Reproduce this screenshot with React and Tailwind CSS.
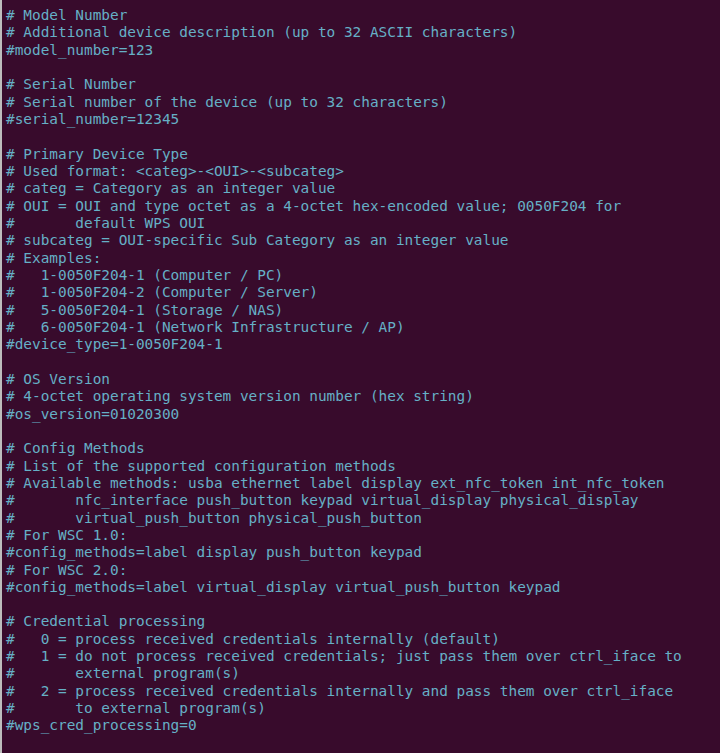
import React from "react";

const lines = [
  "# Model Number",
  "# Additional device description (up to 32 ASCII characters)",
  "#model_number=123",
  "",
  "# Serial Number",
  "# Serial number of the device (up to 32 characters)",
  "#serial_number=12345",
  "",
  "# Primary Device Type",
  "# Used format: <categ>-<OUI>-<subcateg>",
  "# categ = Category as an integer value",
  "# OUI = OUI and type octet as a 4-octet hex-encoded value; 0050F204 for",
  "#       default WPS OUI",
  "# subcateg = OUI-specific Sub Category as an integer value",
  "# Examples:",
  "#   1-0050F204-1 (Computer / PC)",
  "#   1-0050F204-2 (Computer / Server)",
  "#   5-0050F204-1 (Storage / NAS)",
  "#   6-0050F204-1 (Network Infrastructure / AP)",
  "#device_type=1-0050F204-1",
  "",
  "# OS Version",
  "# 4-octet operating system version number (hex string)",
  "#os_version=01020300",
  "",
  "# Config Methods",
  "# List of the supported configuration methods",
  "# Available methods: usba ethernet label display ext_nfc_token int_nfc_token",
  "#       nfc_interface push_button keypad virtual_display physical_display",
  "#       virtual_push_button physical_push_button",
  "# For WSC 1.0:",
  "#config_methods=label display push_button keypad",
  "# For WSC 2.0:",
  "#config_methods=label virtual_display virtual_push_button keypad",
  "",
  "# Credential processing",
  "#   0 = process received credentials internally (default)",
  "#   1 = do not process received credentials; just pass them over ctrl_iface to",
  "#       external program(s)",
  "#   2 = process received credentials internally and pass them over ctrl_iface",
  "#       to external program(s)",
  "#wps_cred_processing=0",
];

export default function App() {
  return (
    <div className="flex h-[753px] w-[720px] overflow-hidden bg-[#380b2c]">
      {/* thin light strip on the left edge of the window */}
      <div className="w-[2px] shrink-0 bg-[#bdbdbd]" />
      <div
        className="flex-1 pl-[4px] pt-[7px] text-[14.4px] leading-[17.34px] text-[#66b0c6] whitespace-pre"
        style={{ fontFamily: '"DejaVu Sans Mono", "Liberation Mono", monospace' }}
      >
        {lines.map((l, i) => (
          <div key={i} className="h-[17.34px]">
            {l || " "}
          </div>
        ))}
      </div>
    </div>
  );
}
